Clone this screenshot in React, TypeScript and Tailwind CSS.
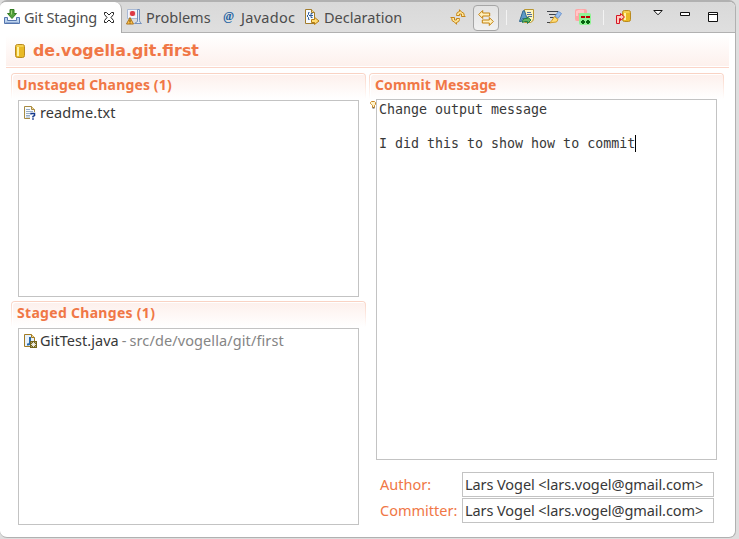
import type { ReactNode } from 'react';

const ui = "font-['Noto_Sans',sans-serif] whitespace-nowrap";

function Icon({ children, w = 16, h = 16, className = '' }: { children: ReactNode; w?: number; h?: number; className?: string }) {
  return (
    <svg width={w} height={h} viewBox={`0 0 ${w} ${h}`} className={`shrink-0 ${className}`} fill="none">
      {children}
    </svg>
  );
}

const StagingIcon = () => (
  <Icon>
    <path d="M.5 8.5h3v3h9v-3h3v6H.5z" fill="#bcd3ee" stroke="#5475ae" />
    <path d="M1.5 13.5h13" stroke="#8fa9d2" />
    <path d="M6 .5h4v4h2.500L8 9.500 3.500 4.500H6z" fill="#54a23d" stroke="#347d25" />
    <path d="M7.500 1.500v4" stroke="#a0d47c" />
  </Icon>
);

const CloseIcon = () => (
  <Icon w={12} h={11}>
    <path d="M1.500.5h2L6 3l2.500-2.500h2v2L8 5.500l2.500 3v2h-2L6 8 3.500 10.500h-2v-2L4 5.500 1.500 2.500z" fill="#fff" stroke="#222" />
  </Icon>
);

const ProblemsIcon = () => (
  <Icon>
    <path d="M1.500.5h10v9h-10z" fill="#f2f6fc" stroke="#a9b9d4" />
    <path d="M11.500.5h2v11q0 2 2 3h-7l3-2z" fill="#dce8f7" stroke="#7692bd" />
    <path d="M3.500 2.500h6v4h-6z" fill="#f7c5c7" />
    <rect x="4" y="2" width="5" height="5" rx="2" fill="#dc3946" />
    <path d="M4 8.500l3.500 6.500h-7z" fill="#ffc44c" stroke="#ae741d" strokeLinejoin="round" />
    <path d="M4 10.500V13M4 13.500v1" stroke="#604100" />
  </Icon>
);

const DeclarationIcon = () => (
  <Icon>
    <path d="M1.500.5h6l3 3v11h-9z" fill="#f5faff" stroke="#a27c2c" />
    <path d="M7.500.5v3h3" fill="#f6d890" stroke="#a27c2c" />
    <path d="M5.500 3.500h-1v2L3 7l1.500 1.500v2h1M8.500 4.500h-1.500v4H8.500M5 6.500h4" stroke="#315f9c" />
    <path d="M7.500 10.500h3v-2.200l4.500 3.700-4.500 3.500v-2h-3z" fill="#ffdc72" stroke="#b47c13" />
  </Icon>
);

const RefreshIcon = () => (
  <Icon>
    <path d="M6.500 5.500q0-2.500 3-3V.7L11.500 3q3 .5 2.800 3.500l.9 1h-3.700V5H9.500v1.500h-3z" fill="#ffe79a" stroke="#c58518" />
    <path d="M9.500 10.500q0 2.500-3 3v1.800L4.500 13q-3-.5-2.800-3.500l-.9-1h3.700V11h2V9.500h3z" fill="#ffe79a" stroke="#c58518" />
  </Icon>
);

const LinkIcon = () => (
  <Icon>
    <path d="M.7 4.500l4-4v2.500h7v3h-7v2.500z" fill="#fff0be" stroke="#c3810d" />
    <path d="M15.300 11.500l-4-4V10h-7v3h7v2.500z" fill="#fff0be" stroke="#c3810d" />
  </Icon>
);

const CompareIcon = () => (
  <Icon>
    <path d="M5.500.5h9v9q0 3-3 4h-6z" fill="#fff6bd" stroke="#b89630" />
    <path d="M8 3.500h4M8 5.500h5M9 7.500h4" stroke="#526da4" />
    <path d="M4 1.800L.5 12.500h2l1-3H6l1 3h2L5.500 1.800z" fill="#5c9ac7" stroke="#32698f" />
    <path d="M3.500 11.500q2-3 5-2V8l3.500 3-3.500 3.500v-2q-3-.5-5 1z" fill="#61b45f" stroke="#237b48" />
  </Icon>
);

const SignIcon = () => (
  <Icon>
    <path d="M0 2.500h11M2 5.500h9M3 8.500h5" stroke="#40444b" />
    <path d="M11.500 2.500l3 2-3.500 5-3-2.500z" fill="#9cc0ed" stroke="#6c95ce" />
    <path d="M7.500 7.500l3.500 3-1.500 2.500-4.500.5L2.500 14l2-2z" fill="#ffdc73" stroke="#d09a27" />
    <path d="M0 13.500h3" stroke="#444" />
  </Icon>
);

const ChangeIdIcon = () => (
  <Icon>
    <rect width="12" height="12" rx="2" fill="#ffa6a6" />
    <path d="M1 2q3-2 8-1v3H3v3H1z" fill="#ffc7c7" />
    <rect x="4" y="4" width="12" height="12" rx="2" fill="#90f394" />
    <path d="M6 8h4m1 0h4" stroke="#bd0000" strokeWidth="2" />
    <path d="M6 13h4m1 0h4M8 11v4m5-4v4" stroke="#086510" strokeWidth="2" />
  </Icon>
);

function Cylinder({ x = 0, y = 0, w = 9, h = 13 }: { x?: number; y?: number; w?: number; h?: number }) {
  return (
    <g transform={`translate(${x} ${y})`}>
      <rect x=".5" y=".5" width={w - 1} height={h - 1} rx="2" fill="#e9b925" stroke="#b98a20" />
      <path d={`M3 3v${h - 5}`} stroke="#fff3a6" strokeWidth="2" />
      <path d={`M1.500 1.500h${w - 3}v1h-${w - 3}z`} fill="#ffe679" />
    </g>
  );
}

const PushIcon = () => (
  <Icon>
    <Cylinder x={6} y={1} w={9} h={12} />
    <path d="M.5 14.500v-8h4v-2L8.500 8l-4 3.500v-2h-1v5z" fill="#ffc9bd" stroke="#d51525" />
  </Icon>
);

const TextFileIcon = () => (
  <Icon>
    <path d="M.5 1.500h7l3 3v9H.5z" fill="#f7fbff" stroke="#a78a42" />
    <path d="M7.500 1.500v3h3" fill="#f4d995" stroke="#a78a42" />
    <path d="M2 4.500h4M2 6.500h7M2 8.500h7M2 10.500h5M2 12h4" stroke="#98adc6" />
    <path d="M6 7h6v8H6z" fill="#fff" />
    <path d="M7 9.500v-1h3.500v2L9 11.500v1M8.200 14h1.600" stroke="#14398c" strokeWidth="1.500" />
  </Icon>
);

const JavaFileIcon = () => (
  <Icon>
    <path d="M.5 1.500h7l3 3v9H.5z" fill="#e7f1fc" stroke="#a27b23" />
    <path d="M7.500 1.500v3h3" fill="#f4d995" stroke="#a27b23" />
    <path d="M6 4v5.500q0 2-2 2H3" stroke="#286aaa" strokeWidth="2" />
    <rect x="6" y="8" width="7" height="7" fill="#75661b" />
    <path d="M9.500 9v5M7 11.500h5M7.500 9.500l4 4m0-4l-4 4" stroke="#fff" strokeWidth=".8" />
  </Icon>
);

const Separator = () => <i className="h-[15px] w-px shrink-0 bg-[#f3f3f3]" />;

const tabText = `${ui} text-[14.5px] leading-5 text-[#4c4c4c]`;

function Section({ title, tracking, children, className = '' }: { title: string; tracking: string; children: ReactNode; className?: string }) {
  return (
    <section className={`flex flex-col ${className}`}>
      <div className="h-[26px] shrink-0 rounded-t-[4px] bg-linear-to-b from-[#f9d2c3] to-white px-px pt-px">
        <h2 className={`h-[25px] rounded-t-[3px] bg-linear-to-b from-[#fdf0ec] to-white pl-[5px] font-['Noto_Sans',sans-serif] text-[14px] leading-[22px] font-bold whitespace-nowrap text-[#f07746] shadow-[inset_1px_1px_0_white] ${tracking}`}>
          {title}
        </h2>
      </div>
      {children}
    </section>
  );
}

function FileList({ icon, children }: { icon: ReactNode; children: ReactNode }) {
  return (
    <div className="mt-px ml-[7px] flex h-[197px] w-[341px] border border-[#c3c3c3] pt-[4px] pl-[5px]">
      {icon}
      <span className={`text-[14.5px] leading-[15px] text-[#383838] ${ui}`}>{children}</span>
    </div>
  );
}

function Person({ label }: { label: string }) {
  return (
    <label className="flex h-[25px] items-center">
      <span className={`w-[82px] text-[14.5px] text-[#f07746] ${ui}`}>{label}</span>
      <span className={`h-[25px] w-[252px] border border-[#c3c3c3] bg-white pl-[2px] text-[14.5px] leading-[23px] tracking-[-0.08px] text-[#383838] ${ui}`}>
        Lars Vogel &lt;lars.vogel@gmail.com&gt;
      </span>
    </label>
  );
}

export default function App() {
  return (
    <div className="h-[539px] w-[739px] overflow-hidden bg-[#dedede]">
      <main className="flex h-[538px] w-[736px] flex-col overflow-hidden rounded-[7px] border-t-2 border-r border-b border-[#b1b1b1] bg-white">
        <nav className="flex h-[31px] shrink-0 border-b border-[#b1b1b1] bg-linear-to-b from-[#d9d9d9] to-[#dfdfdf]">
          <div className="flex h-[31px] w-[122px] shrink-0 items-center rounded-tr-[7px] border-r border-[#aaa] bg-white pb-px pl-1">
            <StagingIcon />
            <span className={`ml-1 w-[79px] ${tabText} tracking-[-0.2px]`}>Git Staging</span>
            <CloseIcon />
          </div>
          <div className="flex w-[98px] items-center pl-1">
            <ProblemsIcon />
            <span className={`ml-1 ${tabText}`}>Problems</span>
          </div>
          <div className="flex w-[83px] items-center pl-[3px]">
            <span className="w-[18px] pb-[3px] font-['Liberation_Serif',serif] text-[12px] leading-4 font-bold text-[#2262a2]">@</span>
            <span className={`${tabText} tracking-[0.3px]`}>Javadoc</span>
          </div>
          <div className="flex w-[144px] items-center pl-px">
            <DeclarationIcon />
            <span className={`ml-1 ${tabText}`}>Declaration</span>
          </div>
          <div className="flex items-center pl-[3px]">
            <RefreshIcon />
            <button className="mt-px ml-[7px] flex h-[26px] w-[26px] items-center justify-center rounded-[4px] border border-[#a6a6a6] bg-linear-to-b from-[#e3e3e3] to-[#f1f1f1]"><LinkIcon /></button>
            <div className="ml-[7px] flex items-center gap-3">
              <Separator />
              <CompareIcon />
              <SignIcon />
              <ChangeIdIcon />
              <Separator />
              <PushIcon />
            </div>
            <div className="ml-[21px] flex h-[14px] items-start">
              <Icon w={10} h={6}><path d="M.8.5h8.400L5 4.800z" fill="#fff" stroke="#111" /></Icon>
              <Icon w={10} h={4} className="mt-[2px] ml-[17px]"><path d="M.5.5h9v3h-9z" fill="#fff" stroke="#111" /></Icon>
              <Icon w={10} h={10} className="mt-[2px] ml-[18px]"><path d="M.5.5h9v9h-9zM0 2.500h10" fill="#fff" stroke="#111" /></Icon>
            </div>
          </div>
        </nav>
        <header className="mx-[6px] mt-[2px] flex h-[33px] w-[723px] shrink-0 items-center border-b border-[#fbd5c8] bg-linear-to-b from-white to-[#fdf0ec] pl-[9px] shadow-[inset_0_-1px_0_white]">
          <Icon w={10} h={14}><Cylinder w={10} h={14} /></Icon>
          <h1 className="ml-[8px] font-['DejaVu_Sans',sans-serif] text-[15.85px] leading-5 font-bold whitespace-nowrap text-[#f07746]">de.vogella.git.first</h1>
        </header>
        <div className="flex pt-[5px]">
          <div className="ml-[11px] flex w-[355px] flex-col">
            <Section title="Unstaged Changes (1)" tracking="tracking-[0.15px]" className="h-[228px]">
              <FileList icon={<TextFileIcon />}><span className="tracking-[0.1px]">readme.txt</span></FileList>
            </Section>
            <Section title="Staged Changes (1)" tracking="tracking-[0.3px]">
              <FileList icon={<JavaFileIcon />}>
                <span className="tracking-[0.05px]">GitTest.java</span>
                <span className="ml-[3px] text-[#858585]">-</span>
                <span className="ml-[3px] tracking-[0.1px] text-[#858585]">src/de/vogella/git/first</span>
              </FileList>
            </Section>
          </div>
          <div className="ml-[3px] w-[355px]">
            <Section title="Commit Message" tracking="tracking-[0.1px]">
              <div className="flex">
                <Icon w={7} h={12}><path d="M2.500 2.500h3l1 1v2l-1 1v2h-2v-2l-1-1-1-1v-1z" fill="#fff3c8" stroke="#ca8a28" /><path d="M3.500 9h2" stroke="#555" /></Icon>
                <div className="h-[361px] w-[341px] border border-[#c3c3c3] pt-[1px] pl-[2px] font-['DejaVu_Sans_Mono',monospace] text-[13.3px] leading-[17px] whitespace-pre text-[#383838]">
                  <p>Change output message</p>
                  <p>{' '}</p>
                  <p className="flex">I did this to show how to commit<i className="h-[17px] w-px bg-black" /></p>
                </div>
              </div>
            </Section>
            <div className="mt-3 ml-[11px] flex flex-col gap-px">
              <Person label="Author:" />
              <Person label="Committer:" />
            </div>
          </div>
        </div>
      </main>
    </div>
  );
}
